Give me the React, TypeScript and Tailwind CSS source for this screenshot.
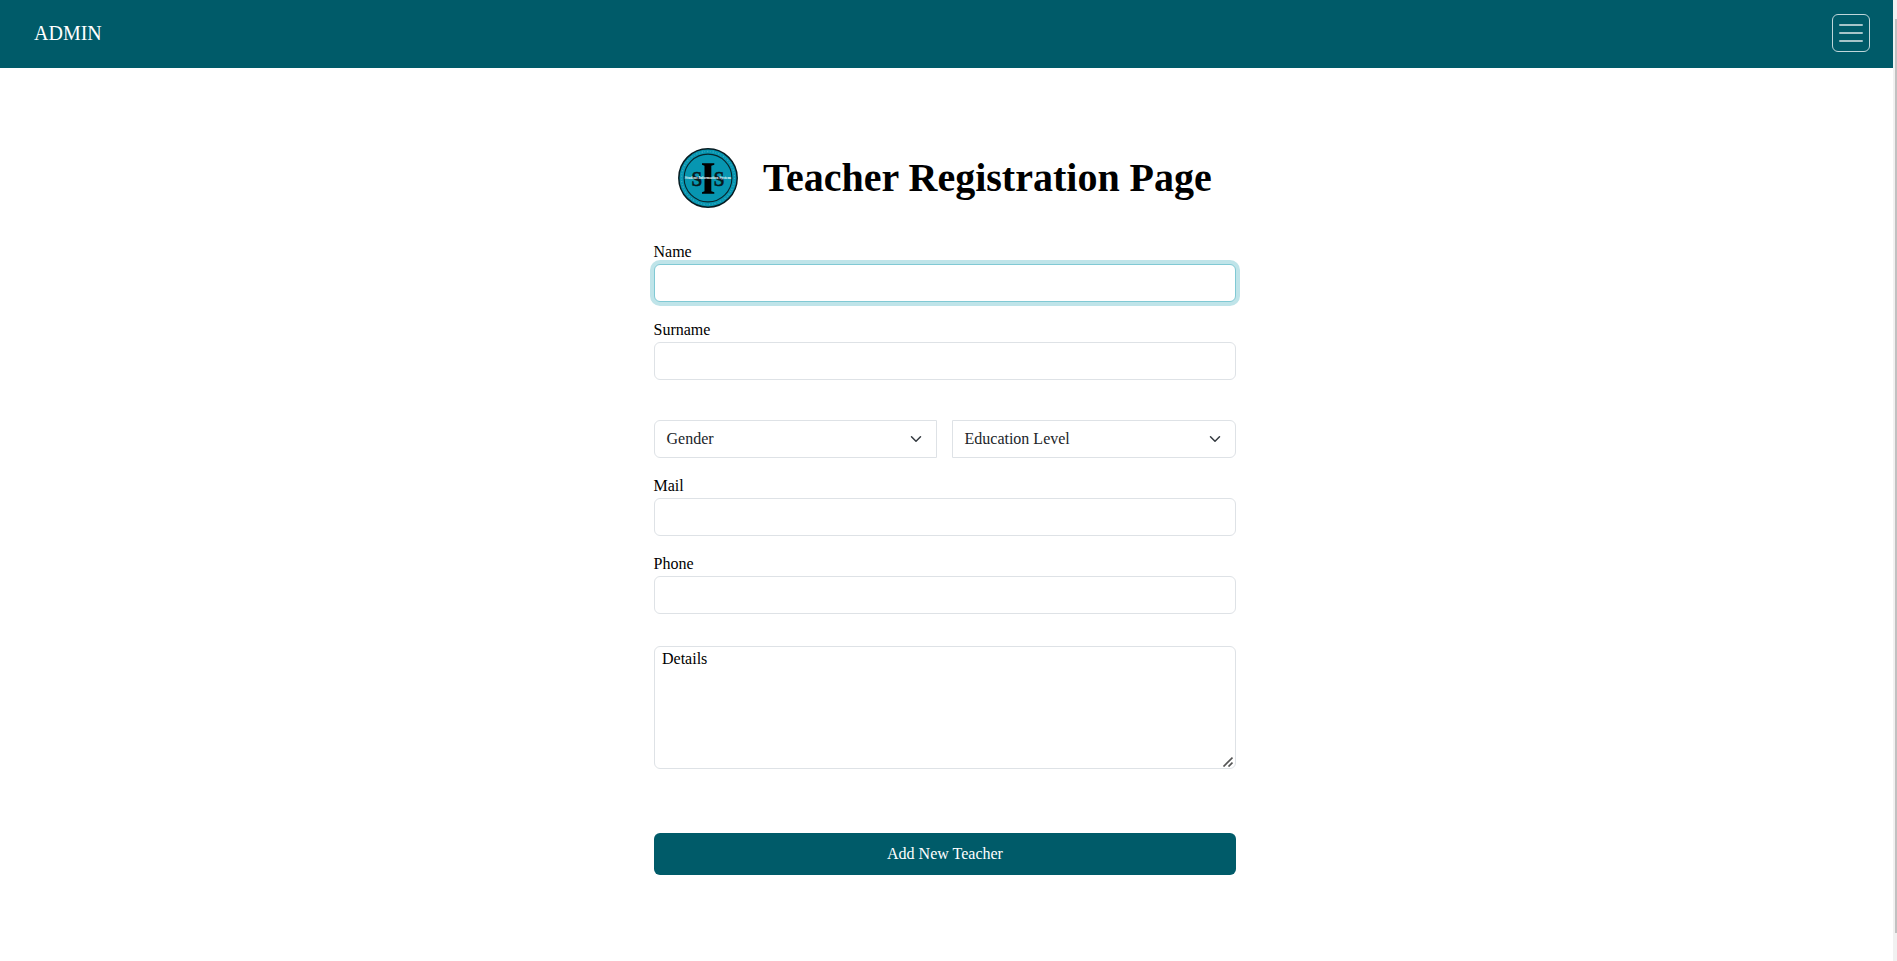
import type { ReactNode } from "react";

const inputClass =
  "block h-[38px] w-full rounded-md border border-[#dee2e6] bg-white px-3 outline-none";

function Field({ label, focused = false }: { label: string; focused?: boolean }) {
  return (
    <label className="mb-4 block">
      <span className="-ml-[0.5px] block h-6 leading-6">{label}</span>
      <input
        className={
          focused
            ? "block h-[38px] w-full rounded-md border border-[#80c9d4] bg-white px-3 shadow-[0_0_0_4px_#bfe4e9] outline-none"
            : inputClass
        }
      />
    </label>
  );
}

function Select({ className, children }: { className: string; children: ReactNode }) {
  return (
    <button
      type="button"
      className={`flex h-[38px] items-center justify-between border border-[#dee2e6] bg-white pr-[14px] pl-[11.5px] text-[#212529] ${className}`}
    >
      <span>{children}</span>
      <svg className="size-3" viewBox="0 0 16 16" fill="none">
        <path d="m2 5 6 6 6-6" stroke="#343a40" strokeWidth="2" strokeLinecap="round" strokeLinejoin="round" />
      </svg>
    </button>
  );
}

function Logo() {
  return (
    <svg className="size-[60px]" viewBox="0 0 60 60" fontFamily="Liberation Serif, serif" fontWeight="bold">
      <circle cx="30" cy="30" r="29.2" fill="#0796b1" stroke="#071c22" strokeWidth="1.5" />
      <circle cx="30" cy="30" r="26.5" fill="none" stroke="#3aa9c0" strokeWidth="1.3" strokeDasharray="1.2 1.6 0.7 2.1" />
      <circle cx="30" cy="30" r="23.9" fill="none" stroke="#07262e" strokeWidth="1.1" />
      <g fontSize="22" textAnchor="middle" fill="#06181d" stroke="#06181d" strokeWidth="0.5">
        <text x="18.8" y="38.3" textLength="10.6" lengthAdjust="spacingAndGlyphs">S</text>
        <text x="41" y="38.3" textLength="10.6" lengthAdjust="spacingAndGlyphs">S</text>
      </g>
      <path d="M24 15.300h12.300v1.500L33.300 17.800v25.400l3 1v1.500H24v-1.500l2.500-1V17.800L24 16.800z" fill="#000" />
      <text x="29.8" y="31.300" fontSize="4" textAnchor="middle" fill="#eef8fa" textLength="46" lengthAdjust="spacingAndGlyphs">Student Information System</text>
    </svg>
  );
}

export default function App() {
  return (
    <div className="flex h-[961px] overflow-hidden bg-white font-['Liberation_Serif',serif] text-base text-black">
      <div className="flex-1">
        <header className="flex h-[68px] items-center justify-between bg-[#005b69] pr-[23px] pl-[34px] text-white">
          <span className="pb-0.5 text-xl">ADMIN</span>
          <button
            type="button"
            aria-label="Menu"
            className="mb-0.5 flex size-[38px] items-center justify-center rounded-md border border-[#bfd6da]"
          >
            <svg className="size-[30px]" viewBox="0 0 30 30" stroke="#a7c5ca" strokeWidth="2" strokeLinecap="round">
              <path d="M4 7h22M4 15h22M4 23h22" />
            </svg>
          </button>
        </header>
        <main className="ml-[654px] w-[582px] pt-20">
          <div className="mb-8 flex h-[60px] items-center pl-6">
            <Logo />
            <h1 className="ml-[25px] text-[40px] leading-none font-bold whitespace-nowrap">Teacher Registration Page</h1>
          </div>
          <Field label="Name" focused />
          <Field label="Surname" />
          <div className="mt-10 mb-4 flex gap-[15px]">
            <Select className="w-[283px] rounded-l-md">Gender</Select>
            <Select className="w-[284px] rounded-r-md">Education Level</Select>
          </div>
          <Field label="Mail" />
          <Field label="Phone" />
          <div className="mt-8 flex h-[123px] items-start justify-between rounded-md border border-[#dee2e6] pl-[7px]">
            <span className="leading-6">Details</span>
            <svg className="mr-0.5 mb-px size-3 self-end" viewBox="0 0 12 12" stroke="#555" strokeWidth="1.7">
              <path d="M2.500 11.500l9-9M7.500 11.500l4-4" />
            </svg>
          </div>
          <button type="button" className="mt-16 block h-[42px] w-full rounded-md bg-[#005b69] text-white">
            Add New Teacher
          </button>
        </main>
      </div>
      <div className="flex w-1 justify-end bg-[#f1f1f1] pt-[19px]">
        <div className="h-[914px] w-0.5 bg-[#c1c1c1]" />
      </div>
    </div>
  );
}
